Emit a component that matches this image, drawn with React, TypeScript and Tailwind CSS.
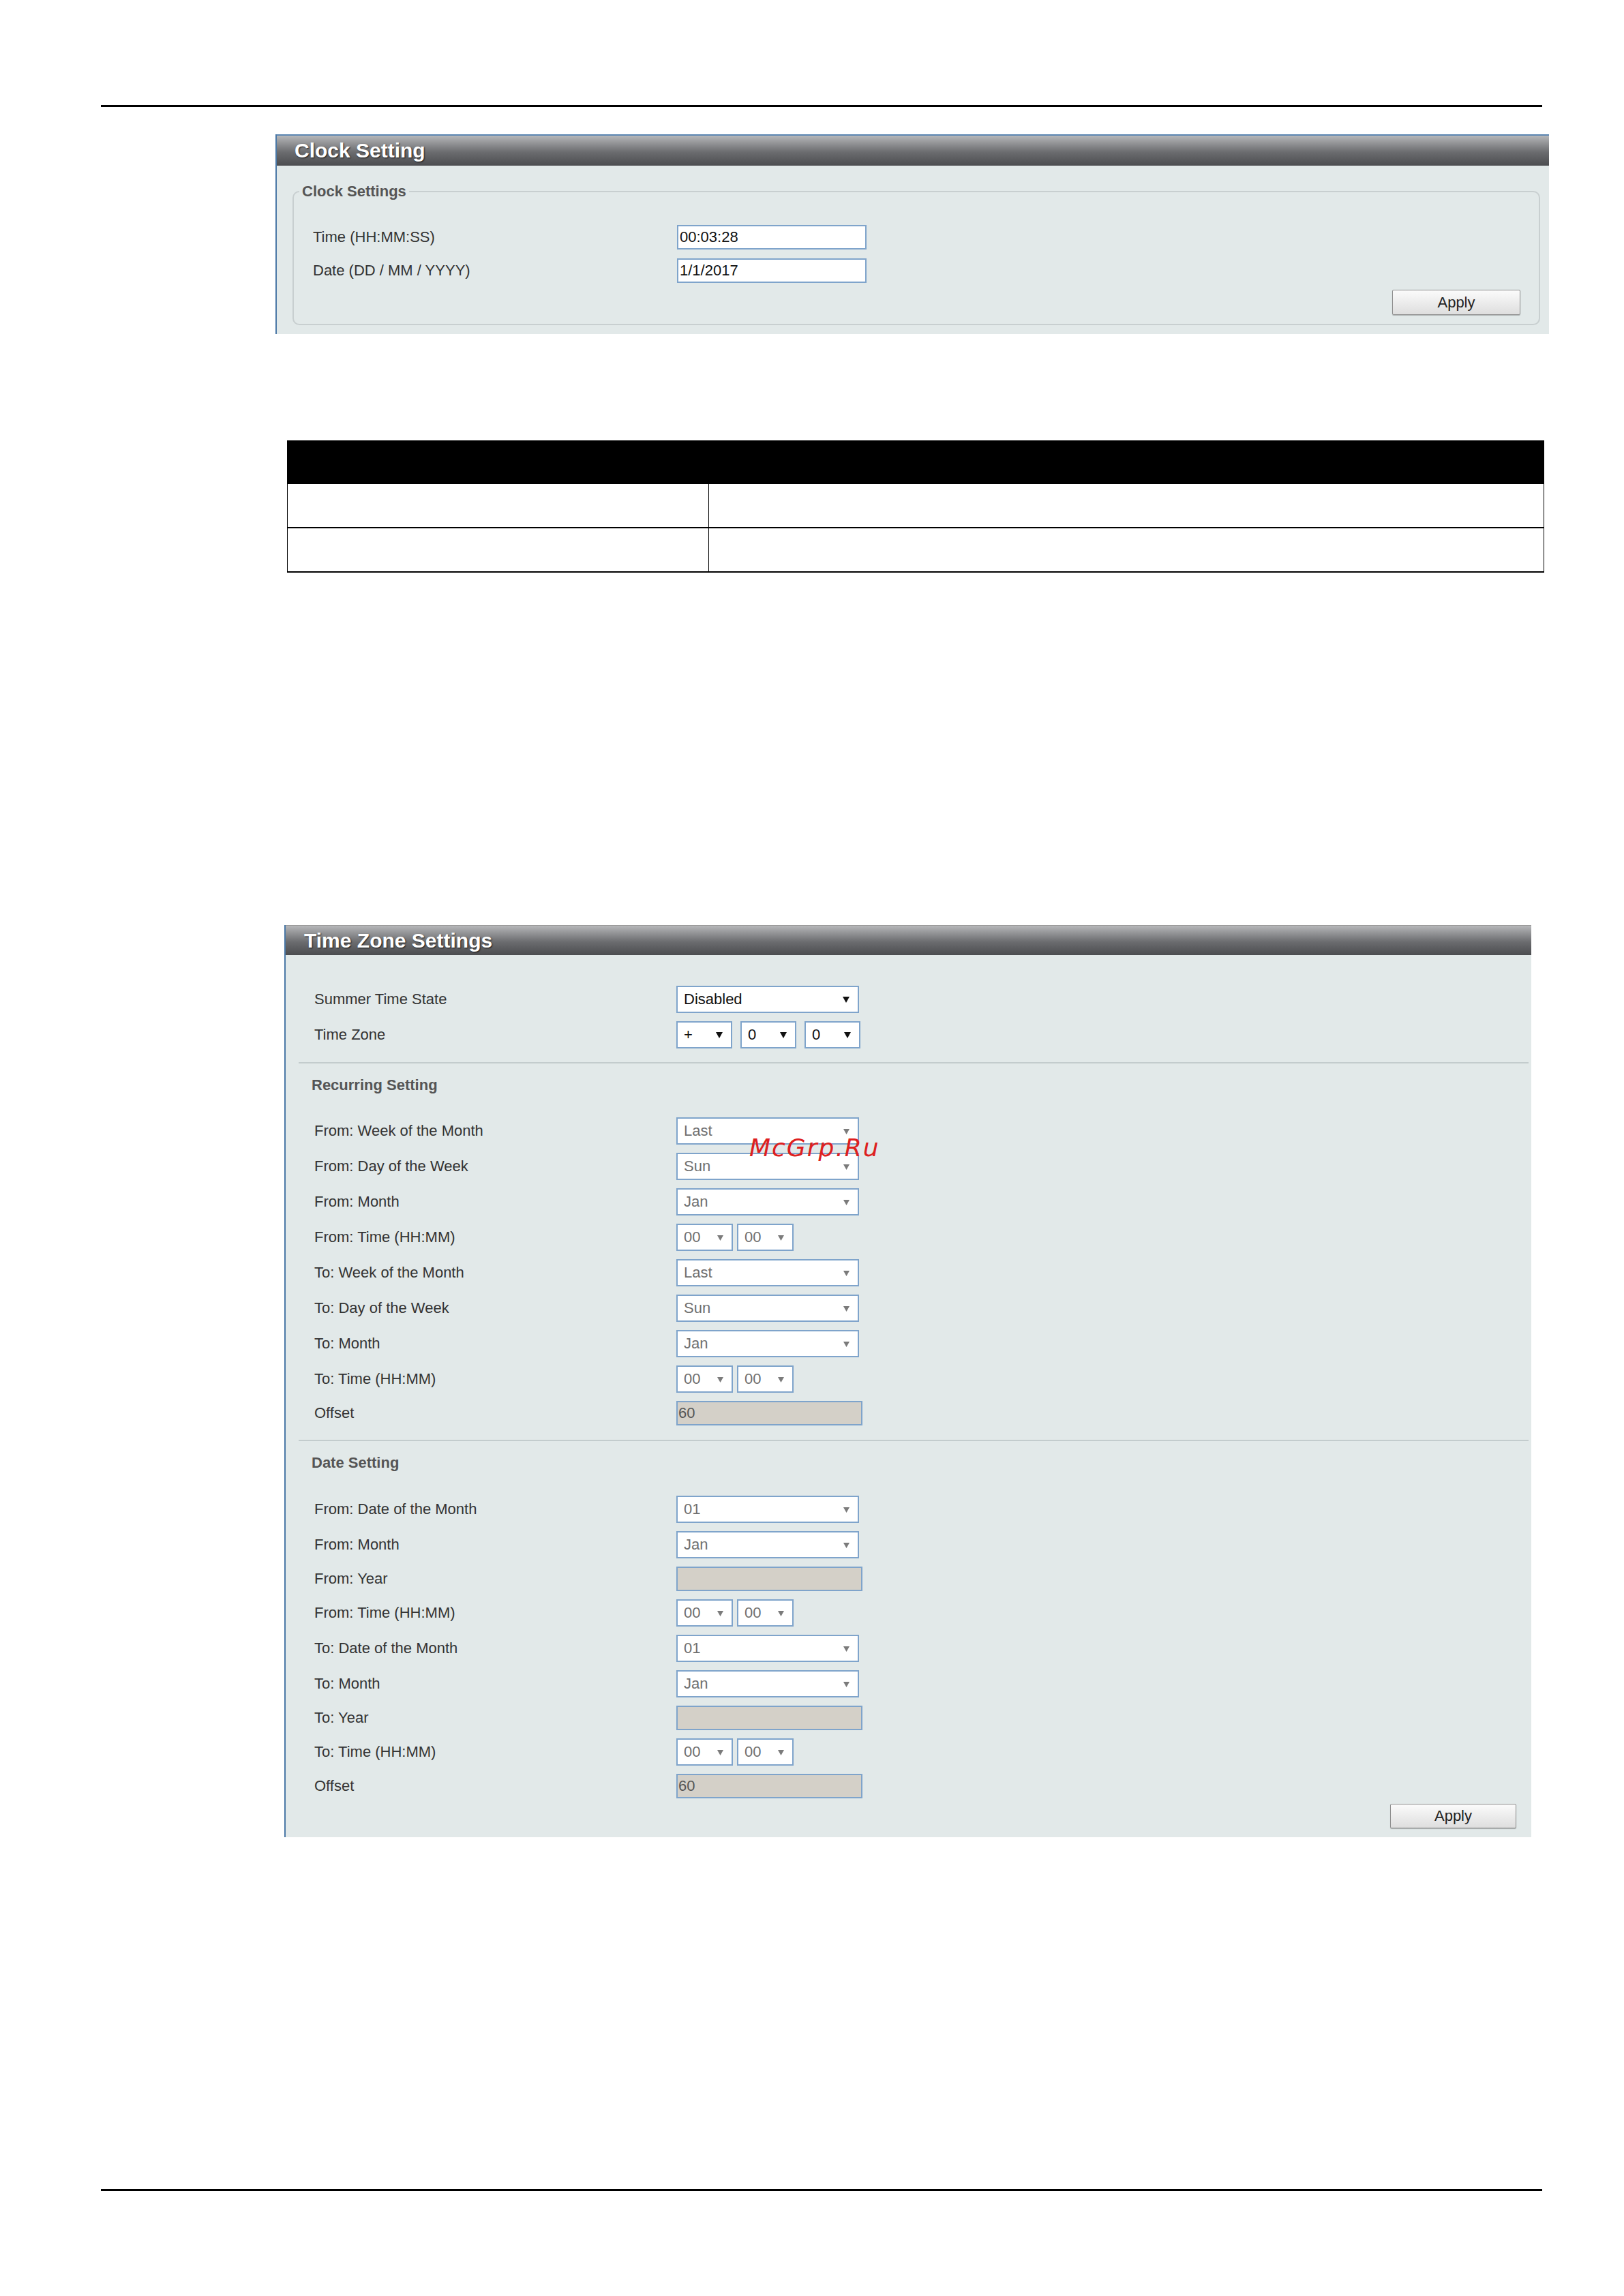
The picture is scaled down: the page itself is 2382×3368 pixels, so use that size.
import type { ReactNode } from 'react';

// Small dropdown arrow used by every select box
function Arrow({ muted }: { muted?: boolean }) {
    return (
        <svg width={muted ? 9 : 10} height={muted ? 9 : 10} viewBox="0 0 10 10">
            <polygon points="0,1 10,1 5,10" fill={muted ? '#7b7b7b' : '#111111'} />
        </svg>
    );
}

function Select({ value, size = 'wide', muted = true }: { value: string; size?: 'wide' | 'tz' | 'time'; muted?: boolean }) {
    const width = size === 'wide' ? 'w-[268px]' : size === 'tz' ? 'w-[82px]' : 'w-[83px]';
    return (
        <div
            className={`${width} flex h-[40px] items-center justify-between border-2 border-[#7fa4cb] bg-white pl-[9px] pr-[12px] text-[22px] leading-none ${
                muted ? 'text-[#6f6f6f]' : 'text-[#111]'
            }`}
        >
            <span>{value}</span>
            <Arrow muted={muted} />
        </div>
    );
}

function GrayInput({ value }: { value?: string }) {
    return (
        <div className="flex h-[36px] w-[273px] items-center border-2 border-[#7fa4cb] bg-[#d4d0c8] pl-[1px] text-[22px] leading-none text-[#555]">
            {value}
        </div>
    );
}

function Row({ label, children }: { label: string; children: ReactNode }) {
    return (
        <div className="flex items-center">
            <div className="w-[531px] text-[22px] leading-none text-[#333]">{label}</div>
            <div className="flex gap-[6px]">{children}</div>
        </div>
    );
}

function TimePair() {
    return (
        <>
            <Select value="00" size="time" />
            <Select value="00" size="time" />
        </>
    );
}

function ApplyButton({ className }: { className: string }) {
    return (
        <button
            className={`${className} rounded-[2px] border border-[#8e8e8e] bg-linear-to-b from-[#fbfbfb] to-[#dedede] text-[22px] leading-none text-[#222] shadow-[0_1px_1px_rgba(0,0,0,0.25)]`}
        >
            Apply
        </button>
    );
}

function PanelHeader({ title, blueTop }: { title: string; blueTop?: boolean }) {
    return (
        <div
            className={`flex items-center bg-linear-to-b from-[#b6b7b9] via-[#6b6c6f] via-55% to-[#4c4d50] text-[30px] font-bold leading-none text-white [text-shadow:1px_1px_2px_rgba(0,0,0,0.75)] ${
                blueTop ? 'h-[46px] border-t-2 border-[#5b85b1] pl-[26px]' : 'h-[44px] border-t border-[#9a9a9a] pl-[27px] text-[29px]'
            }`}
        >
            {title}
        </div>
    );
}

function Separator() {
    return <div className="ml-[19px] mr-[4px] h-[2px] bg-[#c3cccd]" />;
}

function SectionTitle({ children, className }: { children: ReactNode; className: string }) {
    return <div className={`${className} h-[22px] pl-[38px] text-[22px] font-bold leading-[22px] text-[#555]`}>{children}</div>;
}

function ClockPanel() {
    return (
        <section className="ml-[404px] mt-[40px] w-[1868px] border-l-2 border-[#4a78a6] bg-[#e2e9e9]">
            <PanelHeader title="Clock Setting" blueTop />
            <div className="pb-[13px] pl-[23px] pr-[13px] pt-[27px]">
                <fieldset className="rounded-[10px] border-2 border-[#c8cfd0] pb-[13px] pl-[28px] pr-[27px]">
                    <legend className="-ml-[20px] h-[22px] px-[4px] text-[22px] font-bold leading-[22px] text-[#555]">Clock Settings</legend>
                    <div className="flex flex-col gap-[13px] pt-[38px]">
                        <div className="flex items-center">
                            <div className="w-[534px] text-[22px] leading-none text-[#333]">Time (HH:MM:SS)</div>
                            <input
                                readOnly
                                value="00:03:28"
                                className="h-[36px] w-[278px] border-2 border-[#7fa4cb] bg-white pl-[2px] text-[22px] leading-none text-[#111] outline-none"
                            />
                        </div>
                        <div className="flex items-center">
                            <div className="w-[534px] text-[22px] leading-none text-[#333]">Date (DD / MM / YYYY)</div>
                            <input
                                readOnly
                                value="1/1/2017"
                                className="h-[36px] w-[278px] border-2 border-[#7fa4cb] bg-white pl-[2px] text-[22px] leading-none text-[#111] outline-none"
                            />
                        </div>
                    </div>
                    <div className="mt-[10px] flex justify-end">
                        <ApplyButton className="h-[37px] w-[188px]" />
                    </div>
                </fieldset>
            </div>
        </section>
    );
}

function BlankTable() {
    return (
        <div className="ml-[421px] mt-[156px] w-[1844px] border-x border-black">
            <div className="h-[64px] bg-black" />
            {[0, 1].map((i) => (
                <div key={i} className="flex h-[65px] border-b-2 border-black">
                    <div className="w-[618px] border-r border-black" />
                    <div className="flex-1" />
                </div>
            ))}
        </div>
    );
}

function TimeZonePanel() {
    return (
        <section className="ml-[417px] mt-[517px] w-[1829px] border-l-2 border-[#4a78a6] bg-[#e2e9e9]">
            <PanelHeader title="Time Zone Settings" />
            <div className="flex flex-col pb-[13px] pt-[45px]">
                <div className="flex flex-col gap-[12px] pl-[42px]">
                    <Row label="Summer Time State">
                        <Select value="Disabled" muted={false} />
                    </Row>
                    <Row label="Time Zone">
                        <div className="flex gap-[12px]">
                            <Select value="+" size="tz" muted={false} />
                            <Select value="0" size="tz" muted={false} />
                            <Select value="0" size="tz" muted={false} />
                        </div>
                    </Row>
                </div>

                <div className="mt-[20px]">
                    <Separator />
                </div>
                <SectionTitle className="mt-[21px]">Recurring Setting</SectionTitle>
                <div className="mt-[36px] flex flex-col gap-[12px] pl-[42px]">
                    <Row label="From: Week of the Month">
                        <Select value="Last" />
                    </Row>
                    <Row label="From: Day of the Week">
                        <Select value="Sun" />
                    </Row>
                    <Row label="From: Month">
                        <Select value="Jan" />
                    </Row>
                    <Row label="From: Time (HH:MM)">
                        <TimePair />
                    </Row>
                    <Row label="To: Week of the Month">
                        <Select value="Last" />
                    </Row>
                    <Row label="To: Day of the Week">
                        <Select value="Sun" />
                    </Row>
                    <Row label="To: Month">
                        <Select value="Jan" />
                    </Row>
                    <Row label="To: Time (HH:MM)">
                        <TimePair />
                    </Row>
                    <Row label="Offset">
                        <GrayInput value="60" />
                    </Row>
                </div>

                <div className="mt-[21px]">
                    <Separator />
                </div>
                <SectionTitle className="mt-[21px]">Date Setting</SectionTitle>
                <div className="mt-[37px] flex flex-col gap-[12px] pl-[42px]">
                    <Row label="From: Date of the Month">
                        <Select value="01" />
                    </Row>
                    <Row label="From: Month">
                        <Select value="Jan" />
                    </Row>
                    <Row label="From: Year">
                        <GrayInput />
                    </Row>
                    <Row label="From: Time (HH:MM)">
                        <TimePair />
                    </Row>
                    <Row label="To: Date of the Month">
                        <Select value="01" />
                    </Row>
                    <Row label="To: Month">
                        <Select value="Jan" />
                    </Row>
                    <Row label="To: Year">
                        <GrayInput />
                    </Row>
                    <Row label="To: Time (HH:MM)">
                        <TimePair />
                    </Row>
                    <Row label="Offset">
                        <GrayInput value="60" />
                    </Row>
                </div>

                <div className="mt-[8px] flex justify-end pr-[22px]">
                    <ApplyButton className="h-[36px] w-[185px]" />
                </div>
            </div>
        </section>
    );
}

export default function App() {
    return (
        <div className="relative flex h-[3368px] w-[2382px] flex-col overflow-hidden bg-white pt-[154px] font-['Liberation_Sans',Arial,Helvetica,sans-serif]">
            {/* page header rule */}
            <div className="ml-[148px] h-[3px] w-[2114px] bg-black" />

            <ClockPanel />
            <BlankTable />
            <TimeZonePanel />

            {/* page footer rule */}
            <div className="ml-[148px] mt-[516px] h-[3px] w-[2114px] bg-black" />

            {/* watermark stamped over the screenshot */}
            <div className="absolute left-[1099px] top-[1666px] font-['DejaVu_Sans',sans-serif] text-[36px] italic leading-none tracking-[2px] text-[#dd2020]">
                McGrp.Ru
            </div>
        </div>
    );
}
